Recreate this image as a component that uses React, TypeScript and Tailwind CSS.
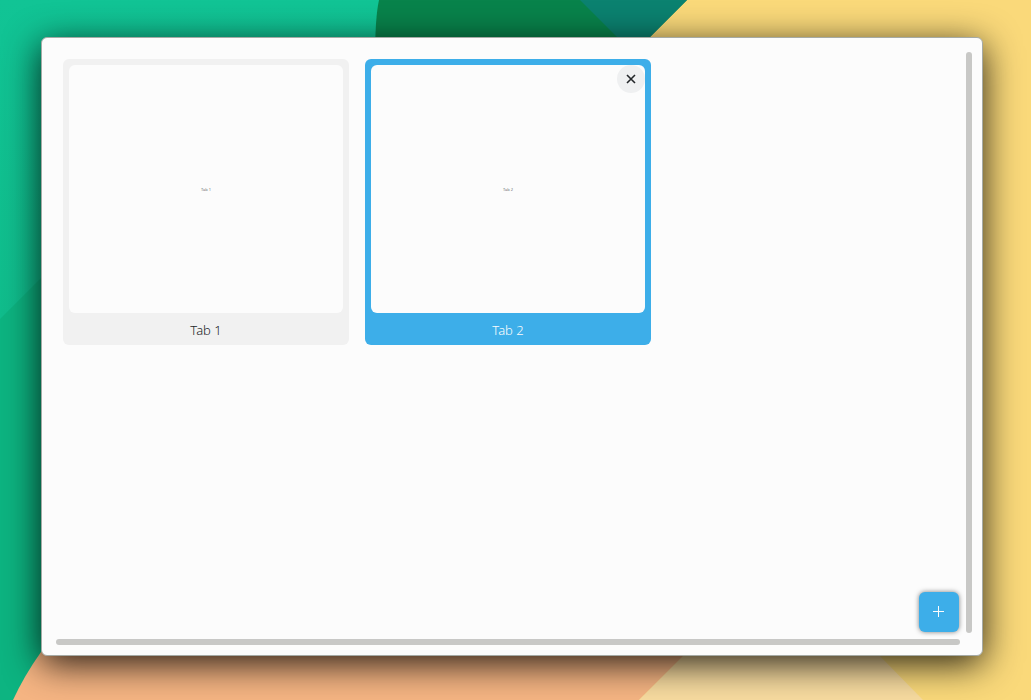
import { useState } from "react";

type Tab = { id: number; title: string };

function Wallpaper() {
  return (
    <svg
      className="absolute inset-0 h-full w-full"
      viewBox="0 0 1031 700"
      preserveAspectRatio="xMidYMid slice"
      aria-hidden="true"
    >
      <defs>
        <linearGradient id="mint" x1="0" y1="0" x2="0" y2="1">
          <stop offset="0" stopColor="#11c495" />
          <stop offset="1" stopColor="#10bd8c" />
        </linearGradient>
      </defs>
      <rect width="1031" height="700" fill="#fad97a" />
      <path d="M0 0H400V320H0Z" fill="url(#mint)" />
      <path d="M0 319L60 259V700H0Z" fill="#0db481" />
      <path d="M379 0Q375 18 375 60H627L687 0Z" fill="#08834b" />
      <path d="M580 0H687L627 60L620 40Z" fill="#0b8270" />
      <path d="M13 700Q24 676 41 652L90 600H740L639 700Z" fill="#f6b583" />
      <path d="M639 700L739 600H825L923 700Z" fill="#f8dca0" />
    </svg>
  );
}

type CardProps = {
  tab: Tab;
  active: boolean;
  onSelect: () => void;
  onClose: () => void;
};

function TabCard({ tab, active, onSelect, onClose }: CardProps) {
  return (
    <li className="relative">
      <button
        type="button"
        aria-pressed={active}
        onClick={onSelect}
        className={
          active
            ? "flex w-[286px] flex-col rounded-md bg-[#3daee9] px-1.5 pt-1.5 text-[#fcfcfc]"
            : "flex w-[286px] flex-col rounded-md bg-[#f1f1f1] px-1.5 pt-1.5 text-[#232629]"
        }
      >
        <span
          aria-hidden="true"
          className="flex h-[248px] w-full items-center justify-center rounded-md bg-[#fcfcfc] pt-0.5 text-[4px] text-[#6a6c6e]"
        >
          {tab.title}
        </span>
        <span className="h-8 w-full text-center text-[13px] leading-[34px] font-light">
          {tab.title}
        </span>
      </button>
      {active && (
        <button
          type="button"
          aria-label={"Close " + tab.title}
          onClick={onClose}
          className="absolute top-1.5 right-1.5 flex size-7 items-center justify-center rounded-full bg-[#eff0f1] text-[#232629]"
        >
          <svg viewBox="0 0 10 10" className="size-2.5" aria-hidden="true">
            <path d="M1 1L9 9M9 1L1 9" stroke="currentColor" strokeWidth="1.6" />
          </svg>
        </button>
      )}
    </li>
  );
}

export default function App() {
  const [tabs, setTabs] = useState<Tab[]>([
    { id: 1, title: "Tab 1" },
    { id: 2, title: "Tab 2" },
  ]);
  const [current, setCurrent] = useState(2);

  const addTab = () => {
    const id = Math.max(0, ...tabs.map((t) => t.id)) + 1;
    setTabs([...tabs, { id, title: "Tab " + id }]);
    setCurrent(id);
  };

  return (
    <div className="relative flex min-h-screen overflow-hidden pt-[37px] pr-12 pb-11 pl-[41px] font-['Noto_Sans',sans-serif]">
      <Wallpaper />
      <main className="relative grid flex-1 grid-cols-[1fr_6px] grid-rows-[1fr_6px] rounded-md border border-[#a5aaa5] bg-[#fcfcfc] pr-2.5 pb-2.5 shadow-[0_8px_36px_rgba(0,0,0,0.85)]">
        <section className="relative" aria-label="Open tabs">
          <ul className="flex flex-wrap gap-4 p-[21px]">
            {tabs.map((tab) => (
              <TabCard
                key={tab.id}
                tab={tab}
                active={tab.id === current}
                onSelect={() => setCurrent(tab.id)}
                onClose={() => setTabs(tabs.filter((t) => t.id !== tab.id))}
              />
            ))}
          </ul>
          <button
            type="button"
            aria-label="New tab"
            onClick={addTab}
            className="absolute right-[7px] bottom-[7px] flex size-10 items-center justify-center rounded-md bg-[#3daee9] text-[#fcfcfc] shadow-[0_0_5px_rgba(0,0,0,0.5)]"
          >
            <svg viewBox="0 0 12 12" className="size-3" aria-hidden="true">
              <path d="M5.5 0V11M0 5.5H11" stroke="currentColor" strokeWidth="1" />
            </svg>
          </button>
        </section>
        <div className="mt-3.5 mb-1.5 rounded-full bg-[#c8c8c6]" />
        <div className="mr-1.5 ml-3.5 rounded-full bg-[#c8c8c6]" />
      </main>
    </div>
  );
}
